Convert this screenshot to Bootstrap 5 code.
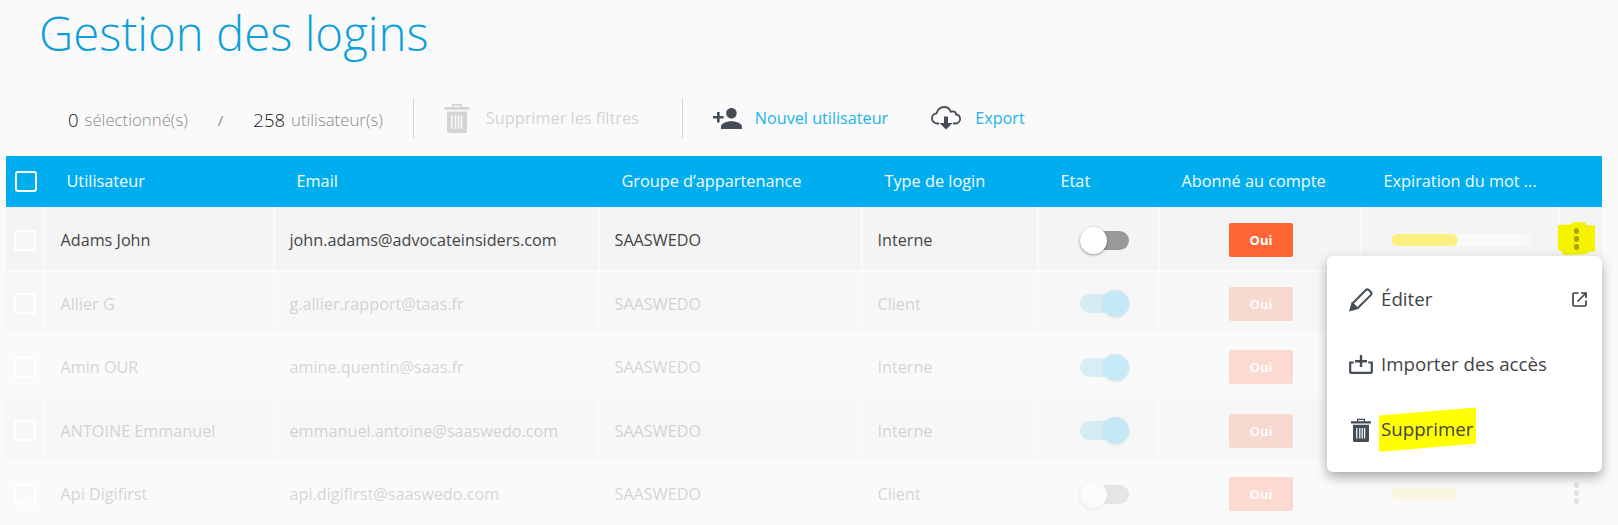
<!DOCTYPE html>
<html lang="fr">
<head>
<meta charset="utf-8">
<title>Gestion des logins</title>
<link href="https://cdn.jsdelivr.net/npm/bootstrap@5.3.0/dist/css/bootstrap.min.css" rel="stylesheet">
<style>
html,body{height:525px;overflow:hidden}
body{background:#fafafa;font-family:"Open Sans","Liberation Sans",sans-serif;font-size:16px;color:#444}
.pagehead{margin:0;padding:6px 0 0 39px;height:98px;font-size:47.4px;line-height:54px;font-weight:300;color:#0c9fdb}
.tools{height:40px;margin-bottom:18px;padding-left:68px}
.tools .num{color:#111;font-size:18.5px;font-weight:300;margin-top:4px}
.tools .lbl{color:#8a8a8a;font-size:16.8px;margin-left:6px;font-weight:300;margin-top:4px}
.tools .slash{color:#888;font-size:15px;margin:4px 30px 0 30px}
.vsep{width:1px;height:40px;background:#d6d6d6}
.disabled-act{color:#d4d4d4;font-size:16.3px;font-weight:400}
.act{color:#1cb3ee;font-size:16.2px;text-decoration:none}
.ic{color:#444c56;flex:none}
.usertable{table-layout:fixed;width:1596px;margin:0 0 0 6px;border-collapse:separate;border-spacing:0;--bs-table-bg:transparent}
.usertable th{background:#00aeef;color:#f4fbff;font-weight:400;font-size:16.3px;height:51px;padding:0 0 1px 21.5px;border:0;vertical-align:middle;white-space:nowrap}
.usertable th:first-child{padding-left:9px}
.usertable td{height:63.5px;padding:3px 0 0 14.5px;border:0;border-right:2px solid #fafafa;border-bottom:2px solid #fafafa;vertical-align:middle;color:#444;background:#f8f8f8;font-size:16.2px;white-space:nowrap}
.usertable tbody tr:nth-child(odd) td{background:#fafafa}
.usertable tbody tr:nth-child(even) td{background:#f7f7f7}
.usertable tbody tr:first-child td{background:#f4f4f4;border-top:1px solid #f4f4f4;height:64.5px}
.usertable td:first-child{padding-left:8px}
.usertable td:nth-child(2){padding-left:15.5px}
.usertable td:last-child{border-right:0;padding:0}
.usertable td.ctr{text-align:center;padding:3px 0 0 2px}
.dim td>*{opacity:.2}
.dim td>.box{opacity:1;background:transparent}
.box{display:block;width:22px;height:21px;border:2px solid #fff;border-radius:3px;background:transparent}
.box.rowbox{border-color:#fff;background:#f6f6f6}
.tgl{display:flex;align-items:center;width:49px;height:19px;border-radius:10px;background:#999;margin-right:29.5px;margin-left:auto}
.tgl i{display:block;width:27px;height:27px;border-radius:50%;background:#fff;box-shadow:0 1px 3px rgba(0,0,0,.4)}
.tgl.on{justify-content:flex-end;background:#55bfe6}
.tgl.on i{background:#00aeef}
.tgl.off{background:#999}
.oui{display:inline-block;width:64px;height:34px;line-height:34px;padding:0;background:#ff6633;color:#fff;font-size:13px;font-weight:700;border-radius:2px;vertical-align:middle}
.barout{width:140px;height:12px;margin:0 auto;background:#f9f9f9;border-radius:6px}
.barout .progress-bar{background:#faf080;border-radius:6px}
.dots{display:flex;flex-direction:column;align-items:center;justify-content:center;gap:2.5px;width:37px;height:33px;margin-left:-2px}
.dots i{display:block;width:5.500px;height:5.500px;border-radius:50%;background:#8c8c8c}
.dots.hl{background:#f4f400;clip-path:polygon(0 8%,38% 6%,38% 0,75% 0,75% 8%,100% 10%,100% 88%,80% 90%,80% 96%,15% 100%,10% 88%,0 85%)}
.dots.hl i{background:#a8a400}
.tablewrap{position:relative}
.rowmenu{position:absolute;display:block;left:1327px;top:100px;width:275px;height:216px;padding:11px 0 0;border:0;border-radius:6px;background:#fff;box-shadow:0 5px 12px rgba(0,0,0,.32);z-index:1000;overflow:hidden}
.rowmenu .dropdown-item{display:flex;align-items:center;height:65px;padding:0 0 0 22px;color:#444;font-size:18.700px;background:#fff}
.rowmenu .mi{width:24px;display:flex;justify-content:center;margin-right:8px;color:#444c56}
.hilite{position:relative;z-index:0}
.hilite::before{content:"";position:absolute;z-index:-1;left:-2px;right:-3px;top:-8px;bottom:-8px;background:#ff0;clip-path:polygon(0 18%,100% 0,100% 82%,6% 100%,0 100%)}
</style>
</head>
<body>
<svg width="0" height="0" class="d-block position-absolute">
<symbol id="trash" viewBox="0 0 20 24"><path fill="currentColor" fill-rule="evenodd" d="M0 3.2h6V.8h8v2.4h6v2.2H0zM7.4 3.2h5.2V2.1H7.4zM2 6.8h16v15.700A1.500 1.500 0 0 1 16.500 24h-13A1.500 1.500 0 0 1 2 22.500zM5.200 10v10.500h1.200V10zm3 0v10.500h1.200V10zm2.400 0v10.500h1.200V10zm2.400 0v10.500h1.200V10z"/></symbol>
</svg>
<h1 class="pagehead">Gestion des logins</h1>
<div class="tools d-flex align-items-center">
  <span class="num">0</span><span class="lbl">sélectionné(s)</span>
  <span class="slash">/</span>
  <span class="num">258</span><span class="lbl">utilisateur(s)</span>
  <span class="vsep" style="margin-left:30px"></span>
  <svg width="26" height="30" style="margin-left:30px;color:#d4d4d4"><use href="#trash"/></svg>
  <span class="disabled-act" style="margin-left:16px">Supprimer les filtres</span>
  <span class="vsep" style="margin-left:43px"></span>
  <svg class="ic" width="29" height="21" viewBox="1 4 22 16" style="margin-left:30px"><path fill="currentColor" d="M15 12c2.210 0 4-1.790 4-4s-1.790-4-4-4-4 1.790-4 4 1.790 4 4 4zm-9-2V7H4v3H1v2h3v3h2v-3h3v-2H6zm9 4c-2.670 0-8 1.340-8 4v2h16v-2c0-2.660-5.330-4-8-4z"/></svg>
  <a class="act" href="#" style="margin-left:13px">Nouvel utilisateur</a>
  <svg class="ic" width="30" height="24" viewBox="0 0 30 24" style="margin-left:43px"><path fill="none" stroke="currentColor" stroke-width="1.800" d="M8 17.500H6C3.200 17.500 1 15.200 1 12.300c0-2.600 2-4.700 4.600-5C6.400 3.700 9.600 1 13 1c3.200 0 5.800 2 6.700 4.800.6-.3 1.200-.4 1.800-.4 2 0 3.500 1.400 3.700 3.300 2.400.3 3.900 2.100 3.900 4.300 0 2.400-2 4.500-4.500 4.500H22"/><path fill="currentColor" d="M13 10.500h4V17h4.500L15 23.500 8.500 17H13z"/></svg>
  <a class="act" href="#" style="margin-left:14px">Export</a>
</div>
<div class="tablewrap">
<table class="table usertable mb-0">
<colgroup><col style="width:39px"><col style="width:230px"><col style="width:325px"><col style="width:263px"><col style="width:176px"><col style="width:121px"><col style="width:202px"><col style="width:198px"><col style="width:42px"></colgroup>
<thead><tr>
<th><span class="box"></span></th><th>Utilisateur</th><th>Email</th><th>Groupe d’appartenance</th><th>Type de login</th><th>Etat</th><th>Abonné au compte</th><th>Expiration du mot ...</th><th></th>
</tr></thead>
<tbody>
<tr>
<td><span class="box rowbox"></span></td><td><span>Adams John</span></td><td><span>john.adams@advocateinsiders.com</span></td><td><span>SAASWEDO</span></td><td><span>Interne</span></td>
<td class="ctr"><span class="tgl off"><i></i></span></td><td class="ctr"><span class="badge oui">Oui</span></td>
<td class="ctr"><div class="progress barout"><div class="progress-bar" style="width:48%"></div></div></td><td><span class="dots hl"><i></i><i></i><i></i></span></td>
</tr>
<tr class="dim">
<td><span class="box rowbox"></span></td><td><span>Allier G</span></td><td><span>g.allier.rapport@taas.fr</span></td><td><span>SAASWEDO</span></td><td><span>Client</span></td>
<td class="ctr"><span class="tgl on"><i></i></span></td><td class="ctr"><span class="badge oui">Oui</span></td>
<td class="ctr"><div class="progress barout"><div class="progress-bar" style="width:48%"></div></div></td><td><span class="dots"><i></i><i></i><i></i></span></td>
</tr>
<tr class="dim">
<td><span class="box rowbox"></span></td><td><span>Amin OUR</span></td><td><span>amine.quentin@saas.fr</span></td><td><span>SAASWEDO</span></td><td><span>Interne</span></td>
<td class="ctr"><span class="tgl on"><i></i></span></td><td class="ctr"><span class="badge oui">Oui</span></td>
<td class="ctr"><div class="progress barout"><div class="progress-bar" style="width:48%"></div></div></td><td><span class="dots"><i></i><i></i><i></i></span></td>
</tr>
<tr class="dim">
<td><span class="box rowbox"></span></td><td><span>ANTOINE Emmanuel</span></td><td><span>emmanuel.antoine@saaswedo.com</span></td><td><span>SAASWEDO</span></td><td><span>Interne</span></td>
<td class="ctr"><span class="tgl on"><i></i></span></td><td class="ctr"><span class="badge oui">Oui</span></td>
<td class="ctr"><div class="progress barout"><div class="progress-bar" style="width:48%"></div></div></td><td><span class="dots"><i></i><i></i><i></i></span></td>
</tr>
<tr class="dim">
<td><span class="box rowbox"></span></td><td><span>Api Digifirst</span></td><td><span>api.digifirst@saaswedo.com</span></td><td><span>SAASWEDO</span></td><td><span>Client</span></td>
<td class="ctr"><span class="tgl off"><i></i></span></td><td class="ctr"><span class="badge oui">Oui</span></td>
<td class="ctr"><div class="progress barout"><div class="progress-bar" style="width:48%"></div></div></td><td><span class="dots"><i></i><i></i><i></i></span></td>
</tr>
</tbody>
</table>
<div class="dropdown-menu rowmenu">
  <a class="dropdown-item" href="#"><span class="mi"><svg width="24" height="25" viewBox="0 0 24 24"><path fill="none" stroke="currentColor" stroke-width="2" d="M4 15.500 16.600 2.700q1.600-1.500 3.200-.2l2 2q1.400 1.600 0 3.100L9 20.200"/><path fill="currentColor" d="M0 24l2.800-10 7.400 7.200z"/></svg></span>Éditer
    <svg class="ms-auto" width="15" height="15" viewBox="0 0 15 15" style="margin-right:15px;color:#3c424a"><path fill="none" stroke="currentColor" stroke-width="1.700" d="M6.500 1H2.200A1.200 1.200 0 0 0 1 2.200v10.600A1.200 1.200 0 0 0 2.200 14h10.600a1.200 1.200 0 0 0 1.200-1.200V8.500M5.500 9.500 13.500 1.500M9 1h5v5"/></svg></a>
  <a class="dropdown-item" href="#"><span class="mi"><svg width="24" height="19" viewBox="0 0 24 19"><path fill="none" stroke="currentColor" stroke-width="2.200" d="M4.800 7.500H1.200v9a1.400 1.400 0 0 0 1.400 1.400h18.800a1.400 1.400 0 0 0 1.400-1.400v-9h-3.600"/><path fill="currentColor" d="M10.800 0h2.400v5h4.800v2.400h-4.800v4.600h-2.400V7.400H6V5h4.800z"/></svg></span>Importer des accès</a>
  <a class="dropdown-item" href="#"><span class="mi"><svg width="20" height="24"><use href="#trash"/></svg></span><span class="hilite">Supprimer</span></a>
</div>
</div>
</body>
</html>
